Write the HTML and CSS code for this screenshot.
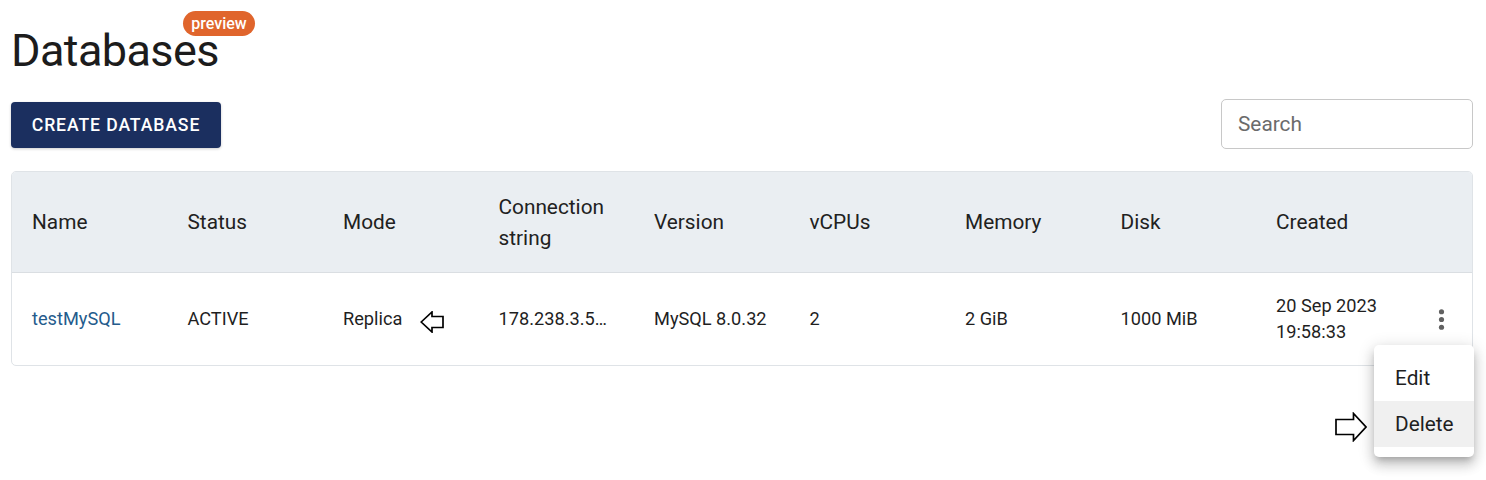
FILE: index.html
```html
<!DOCTYPE html>
<html lang="en">
<head>
<meta charset="utf-8">
<title>Databases</title>
<link rel="stylesheet" href="styles.css">
</head>
<body>
<div class="page">
  <div class="title-wrap">
    <h1 class="title">Databases</h1>
    <span class="badge">preview</span>
  </div>

  <div class="toolbar">
    <button class="btn-create">CREATE DATABASE</button>
    <input class="search" type="text" placeholder="Search">
  </div>

  <div class="card">
    <div class="row head">
      <div class="cell">Name</div>
      <div class="cell">Status</div>
      <div class="cell">Mode</div>
      <div class="cell">Connection string</div>
      <div class="cell">Version</div>
      <div class="cell">vCPUs</div>
      <div class="cell">Memory</div>
      <div class="cell">Disk</div>
      <div class="cell">Created</div>
      <div class="cell"></div>
    </div>
    <div class="row body">
      <div class="cell"><a class="link" href="#">testMySQL</a></div>
      <div class="cell">ACTIVE</div>
      <div class="cell mode">Replica
        <svg class="arrow-left" width="24" height="22" viewBox="0 0 24 22"><path d="M1.2 11 L12 1 L12 5.5 L23 5.5 L23 16.5 L12 16.5 L12 21 Z" fill="none" stroke="#000" stroke-width="1.7" stroke-linejoin="miter"/></svg>
      </div>
      <div class="cell">178.238.3.5…</div>
      <div class="cell">MySQL 8.0.32</div>
      <div class="cell">2</div>
      <div class="cell">2 GiB</div>
      <div class="cell">1000 MiB</div>
      <div class="cell">20 Sep 2023<br>19:58:33</div>
      <div class="cell actions">
        <svg width="31" height="31" viewBox="0 0 24 24"><circle cx="12" cy="6" r="2" fill="#616161"/><circle cx="12" cy="12" r="2" fill="#616161"/><circle cx="12" cy="18" r="2" fill="#616161"/></svg>
      </div>
    </div>
  </div>

  <svg class="arrow-right" width="32" height="30" viewBox="0 0 32 30"><path d="M1 7.5 L18.5 7.5 L18.5 1.5 L31 15 L18.5 28.5 L18.5 22.5 L1 22.5 Z" fill="none" stroke="#000" stroke-width="1.7"/></svg>

  <ul class="menu">
    <li class="menu-item">Edit</li>
    <li class="menu-item active">Delete</li>
  </ul>
</div>
</body>
</html>
```

FILE: styles.css
```css
* { box-sizing: border-box; }

html, body {
  margin: 0;
  padding: 0;
  background: #ffffff;
}

body {
  font-family: Roboto, "Liberation Sans", Arial, sans-serif;
  color: #212121;
}

.page {
  position: relative;
  min-height: 480px;
  padding: 0 13px 0 11px;
}

.title-wrap {
  position: relative;
  padding-top: 24px;
  height: 78px;
}

.title {
  margin: 0;
  font-size: 45px;
  font-weight: 400;
  line-height: 54px;
  letter-spacing: -0.6px;
  color: #1c1c1c;
}

.badge {
  position: absolute;
  left: 172px;
  top: 11px;
  width: 72px;
  height: 25px;
  border-radius: 13px;
  background: #e0652c;
  color: #ffffff;
  font-size: 16px;
  font-weight: 500;
  line-height: 25px;
  text-align: center;
}

.toolbar {
  display: flex;
  align-items: center;
  justify-content: space-between;
  margin-top: 21px;
  height: 50px;
}

.btn-create {
  height: 46px;
  width: 210px;
  margin-top: 2px;
  padding: 0;
  border: none;
  border-radius: 4px;
  background: #1b2f5f;
  color: #ffffff;
  font-family: Roboto, "Liberation Sans", Arial, sans-serif;
  font-size: 17.6px;
  font-weight: 500;
  letter-spacing: 0.9px;
  box-shadow: 0 1px 3px rgba(0,0,0,0.2);
}

.search {
  width: 252px;
  height: 50px;
  border: 1px solid #c8c8c8;
  border-radius: 5px;
  padding: 0 16px;
  font-family: Roboto, "Liberation Sans", Arial, sans-serif;
  font-size: 20.8px;
  color: #333;
  outline: none;
}

.search::placeholder {
  color: #6b6b6b;
  opacity: 1;
}

.card {
  margin-top: 22px;
  border: 1px solid #dfe3e7;
  border-radius: 5px;
  overflow: hidden;
}

.row {
  display: grid;
  grid-template-columns: repeat(9, 155.5px) 1fr;
  align-items: center;
}

.head {
  background: #eaeef2;
  height: 101px;
  border-bottom: 1px solid #dadee2;
  font-size: 20.8px;
  line-height: 31px;
  color: #212121;
  padding-top: 1px;
}

.body {
  height: 92px;
  font-size: 18.2px;
  line-height: 26px;
  color: #1f1f1f;
}

.cell {
  padding: 0 20px;
}

.mode {
  display: flex;
  align-items: center;
  white-space: nowrap;
}

.arrow-left {
  margin-left: 18px;
  margin-top: 6px;
  flex: none;
}

.link {
  color: #245b8c;
  text-decoration: none;
}

.actions {
  padding: 0;
  display: flex;
  justify-content: center;
  align-items: center;
}

.actions svg {
  display: block;
}

.arrow-right {
  position: absolute;
  left: 1335px;
  top: 412px;
}

.menu {
  position: absolute;
  left: 1374px;
  top: 345px;
  width: 100px;
  margin: 0;
  padding: 10px 0;
  list-style: none;
  background: #ffffff;
  border-radius: 5px;
  box-shadow: 0 5px 6px -3px rgba(0,0,0,0.2), 0 8px 12px 1px rgba(0,0,0,0.14), 0 3px 16px 2px rgba(0,0,0,0.12);
}

.menu-item {
  height: 46px;
  padding-left: 21px;
  font-size: 20.8px;
  line-height: 46px;
  color: #1f1f1f;
}

.menu-item.active {
  background: #f0f0f0;
}
```
